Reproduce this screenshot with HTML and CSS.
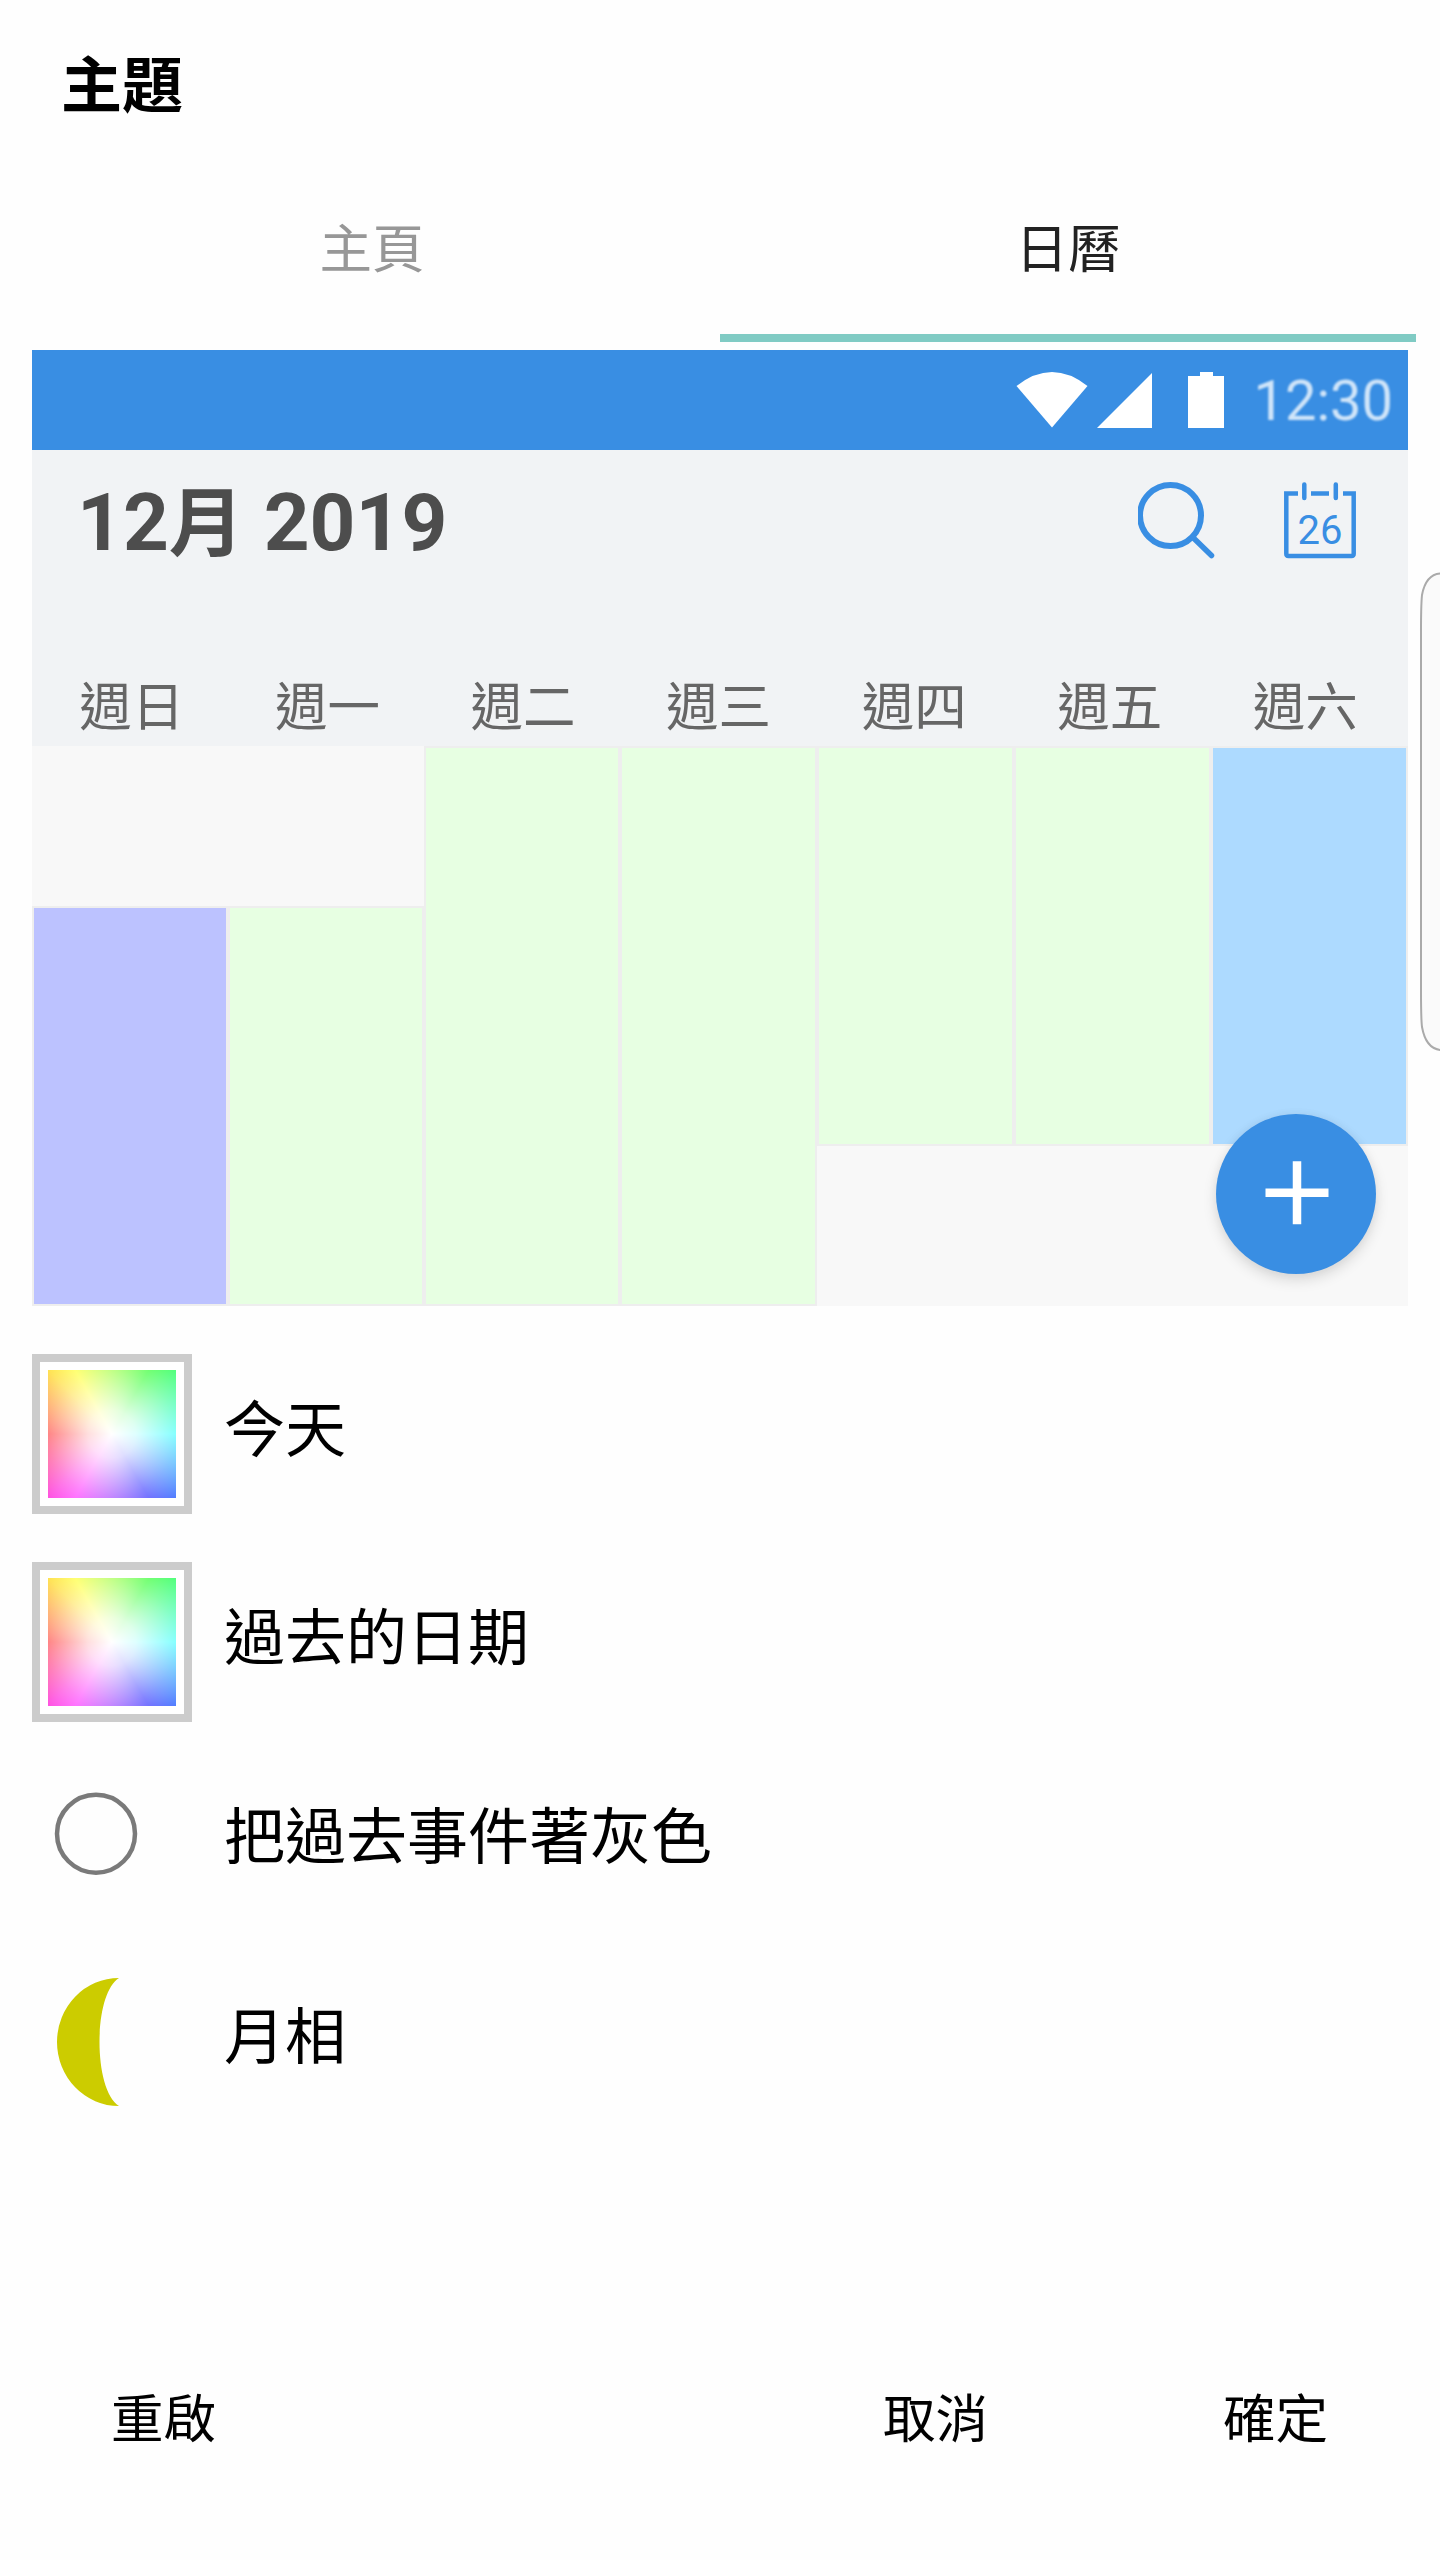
FILE: index.html
```html
<!DOCTYPE html>
<html lang="zh-Hant">
<head>
<meta charset="utf-8">
<title>主題</title>
<link rel="stylesheet" href="styles.css">
</head>
<body>
<main class="dialog">
  <h1 class="title">主題</h1>
  <nav class="tabs">
    <div class="tab">主頁</div>
    <div class="tab active">日曆</div>
  </nav>

  <section class="preview">
    <div class="statusbar">
      <svg class="status-icons" width="212" height="56" viewBox="0 0 212 56" fill="#fff">
        <path d="M0.500 14Q36 -14 71.500 14L36 55.500Z"/>
        <path d="M81 56L136 1V56Z"/>
        <path d="M172 56V4H184V0H197V4H208V56Z"/>
      </svg>
      <span class="clock">12:30</span>
    </div>
    <header class="month">
      <h2 class="month-name">12<span class="month-unit">月</span> 2019</h2>
      <svg class="icon" width="77" height="78" viewBox="0 0 77 78" fill="none" stroke="#398ee3" stroke-width="6">
        <circle cx="32.500" cy="33.500" r="30.500"/>
        <path d="M55 55.500L73.500 73.500" stroke-linecap="round" stroke-width="5.500"/>
      </svg>
      <svg class="icon calendar-icon" width="72" height="78" viewBox="0 0 72 78" fill="none" stroke="#398ee3" stroke-width="4.500">
        <path d="M14 11.500H2.300V71.800Q2.300 74 4.500 74H67.500Q69.700 74 69.700 71.800V11.500H59M27 11.500H45"/>
        <path d="M20.300 2.500V16M51.800 2.500V16" stroke-linecap="round"/>
        <text x="36" y="62" text-anchor="middle" class="icon-day">26</text>
      </svg>
    </header>
    <div class="weekdays">
      <span>週日</span><span>週一</span><span>週二</span><span>週三</span><span>週四</span><span>週五</span><span>週六</span>
    </div>
    <div class="days">
      <div class="day sunday late"></div>
      <div class="day late"></div>
      <div class="day full"></div>
      <div class="day full"></div>
      <div class="day early"></div>
      <div class="day early"></div>
      <div class="day saturday early"></div>
    </div>
    <div class="fab">
      <svg width="160" height="160" viewBox="0 0 160 160" stroke="#fff" stroke-width="8.500"><path d="M49.500 78.700H112.500M81 47.200V110.200"/></svg>
    </div>
  </section>

  <section class="options">
    <div class="option"><div class="swatch"></div><span class="label">今天</span></div>
    <div class="option"><div class="swatch"></div><span class="label">過去的日期</span></div>
    <div class="option radio-row">
      <svg class="option-icon" width="160" height="88" viewBox="0 0 160 88"><circle cx="64" cy="43.700" r="39" fill="none" stroke="#7a7a7a" stroke-width="4.500"/></svg>
      <span class="label">把過去事件著灰色</span>
    </div>
    <div class="option moon-row">
      <svg class="option-icon" width="160" height="128" viewBox="0 0 160 128"><path d="M87 0A62 64 0 0 0 87 128C61 112 61 16 87 0Z" fill="#cccc00"/></svg>
      <span class="label">月相</span>
    </div>
  </section>

  <footer class="actions">
    <span class="action reset">重啟</span>
    <span class="action">取消</span>
    <span class="action">確定</span>
  </footer>
</main>
<svg class="edge-panel" width="22" height="484" viewBox="0 0 22 484"><path d="M23 2.500Q8 3 4 24Q3 34 3 60V420Q3 448 4 456Q8 478 23 479" fill="#fafafa" stroke="#aaa" stroke-width="2"/></svg>
</body>
</html>
```
FILE: styles.css
```css
* { box-sizing: border-box; }
body {
  margin: 0;
  position: relative;
  width: 1440px;
  height: 2560px;
  overflow: hidden;
  background: #fefefe;
  color: #000;
  font-family: Roboto, "Noto Sans CJK TC", sans-serif;
}
.dialog { display: flex; flex-direction: column; height: 2560px; }
.title {
  margin: 0;
  height: 158px;
  padding: 42px 0 0 61px;
  font-size: 61px;
  line-height: 90px;
  font-weight: 700;
}
.tabs { display: flex; height: 184px; padding: 0 24px; }
.tab {
  width: 696px;
  padding-top: 53px;
  font-size: 52.5px;
  line-height: 78px;
  text-align: center;
  color: #979797;
}
.tab.active { color: #222; border-bottom: 8px solid #80cbc4; }
.preview {
  position: relative;
  display: flex;
  flex-direction: column;
  width: 1376px;
  height: 956px;
  margin: 8px 0 0 32px;
  background: #f1f3f5;
}
.statusbar {
  display: flex;
  align-items: center;
  justify-content: flex-end;
  gap: 26px;
  height: 100px;
  padding-right: 15px;
  background: #398ee3;
}
.status-icons { filter: blur(.7px); }
.clock { padding-top: 2px; font-size: 56px; line-height: 66px; color: #d0e5f9; filter: blur(.8px); }
.month { display: flex; align-items: flex-start; height: 176px; padding: 0 52px 0 45px; }
.month-name {
  flex: 1;
  margin: 13px 0 0;
  font-size: 80px;
  line-height: 120px;
  font-weight: 700;
  color: #4d4d4d;
}
.month-unit { font-size: 75px; }
.icon { margin-top: 32px; }
.calendar-icon { margin-left: 69px; }
.icon-day { font: 40px Roboto, sans-serif; fill: #398ee3; stroke: none; }
.weekdays, .days { display: grid; }
.weekdays {
  grid-template-columns: repeat(7, 195.6px);
  height: 120px;
  padding: 43px 0 0 2px;
  font-size: 52.5px;
  line-height: 78px;
  text-align: center;
  color: #666;
}
.days {
  grid-template-columns: repeat(3, 196px) repeat(4, 197px);
  grid-template-rows: 160px 240px 160px;
  background: #f8f8f8;
}
.day { background: #e7ffe2; border: 2px solid #eee; }
.late { grid-row: 2 / 4; }
.full { grid-row: 1 / 4; }
.early { grid-row: 1 / 3; }
.sunday { background: #bcc2ff; }
.saturday { background: #addaff; }
.fab {
  position: absolute;
  right: 32px;
  bottom: 32px;
  width: 160px;
  height: 160px;
  border-radius: 50%;
  background: #398ee3;
  box-shadow: 0 6px 14px rgba(0, 0, 0, .13), 0 0 10px rgba(0, 0, 0, .04);
}
.options { display: flex; flex-direction: column; padding: 48px 32px 0; }
.option {
  display: flex;
  align-items: center;
  gap: 32px;
  height: 160px;
  margin-bottom: 48px;
  font-size: 61px;
  line-height: 90px;
}
.label { margin-bottom: 7px; }
.swatch {
  width: 160px;
  height: 160px;
  padding: 8px;
  border: 8px solid #ccc;
  background:
    radial-gradient(circle, #fff, rgba(255, 255, 255, .87) 24px, rgba(255, 255, 255, .52) 64px, rgba(255, 255, 255, 0) 132px) content-box,
    conic-gradient(from 270deg, #f00, #ffd400 45deg, #ff0 60deg, #0f0 120deg, #0ff 180deg, #00f 240deg, #f0f 300deg, #ff00d4 315deg, #f00) content-box,
    #fff;
}
.option-icon { flex: none; }
.radio-row { height: 128px; margin-bottom: 80px; }
.radio-row .label { margin: 7px 0 0; }
.moon-row { height: 128px; margin-bottom: 0; }
.moon-row .label { margin-bottom: 9px; }
.actions {
  display: flex;
  gap: 235px;
  margin-top: auto;
  height: 179px;
  padding: 0 112px 0 111px;
  font-size: 52.5px;
  line-height: 78px;
}
.reset { flex: 1; }
.edge-panel { position: absolute; left: 1418px; top: 571px; }
```
